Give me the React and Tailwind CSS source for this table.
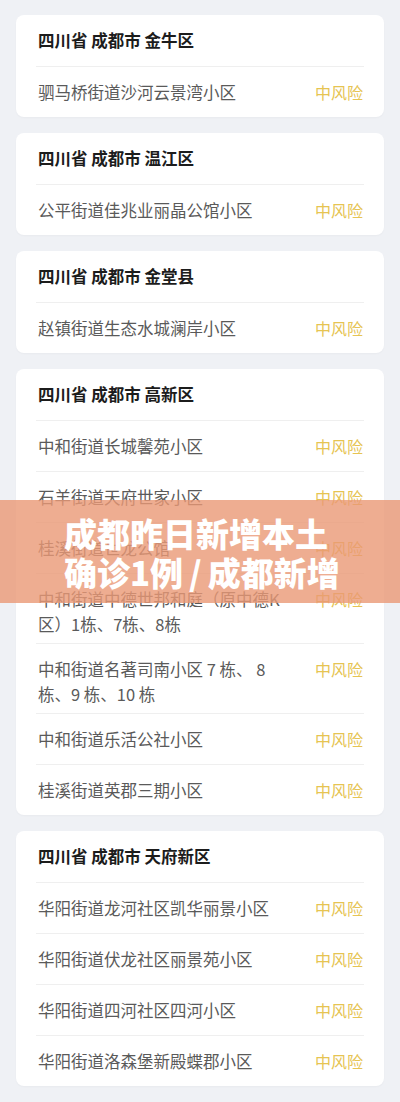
import React from "react";

const font = { fontFamily: '"Noto Sans CJK SC", "Noto Sans", sans-serif' };

const cards = [
  { title: "四川省 成都市 金牛区", rows: [["驷马桥街道沙河云景湾小区"]] },
  { title: "四川省 成都市 温江区", rows: [["公平街道佳兆业丽晶公馆小区"]] },
  { title: "四川省 成都市 金堂县", rows: [["赵镇街道生态水城澜岸小区"]] },
  {
    title: "四川省 成都市 高新区",
    rows: [
      ["中和街道长城馨苑小区"],
      ["石羊街道天府世家小区"],
      ["桂溪街道世龙公馆"],
      ["中和街道中德世邦和庭（原中德K", "区）1栋、7栋、8栋"],
      ["中和街道名著司南小区 7 栋、 8", "栋、9 栋、10 栋"],
      ["中和街道乐活公社小区"],
      ["桂溪街道英郡三期小区"],
    ],
  },
  {
    title: "四川省 成都市 天府新区",
    rows: [
      ["华阳街道龙河社区凯华丽景小区"],
      ["华阳街道伏龙社区丽景苑小区"],
      ["华阳街道四河社区四河小区"],
      ["华阳街道洛森堡新殿蝶郡小区"],
    ],
  },
];

function Card({ title, rows }) {
  return (
    <div className="bg-white rounded-[8px] px-5 shadow-[0_1px_2px_rgba(0,0,0,0.03)]">
      <div className="h-[51px] flex items-center text-[16.5px] font-bold text-[#1c1c1c] leading-[25px] pl-[2px]">
        {title}
      </div>
      {rows.map((lines, i) => (
        <div
          key={i}
          className={`border-t border-[#efefef] flex justify-between items-start min-h-[51px] pt-[13px] ${
            lines.length > 1 ? "pb-[6px]" : "pb-[12px]"
          }`}
        >
          <div className="text-[16.5px] leading-[25px] text-[#5a5a5a] pl-[2px]">
            {lines.map((l, j) => (
              <div key={j} className="whitespace-nowrap">
                {l}
              </div>
            ))}
          </div>
          <div className="text-[16px] leading-[25px] text-[#e6c452] pr-[1px] shrink-0">
            中风险
          </div>
        </div>
      ))}
    </div>
  );
}

export default function App() {
  return (
    <div
      className="relative w-[400px] min-h-[1102px] bg-[#eff1f5] px-4 pt-[15px] pb-[12px] flex flex-col gap-4"
      style={font}
    >
      {cards.map((c, i) => (
        <Card key={i} {...c} />
      ))}
      <div className="absolute left-0 top-[500px] w-[400px] h-[103px] bg-[rgba(234,152,117,0.8)] flex flex-col justify-center pl-[64px] pt-[2px]">
        <div className="text-white font-black text-[33px] leading-[39px] whitespace-nowrap">
          成都昨日新增本土
        </div>
        <div className="text-white font-black text-[33px] leading-[39px] whitespace-nowrap">
          确诊1例<span className="mx-[6px]">/</span>成都新增
        </div>
      </div>
    </div>
  );
}
